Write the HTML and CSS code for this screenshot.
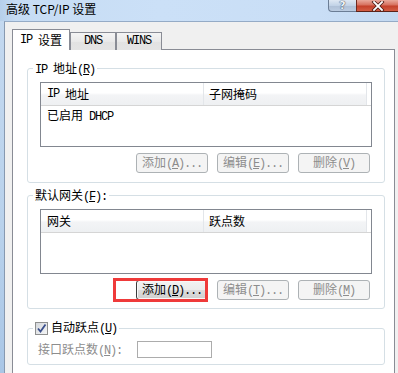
FILE: index.html
```html
<!DOCTYPE html>
<html lang="zh-CN">
<head>
<meta charset="utf-8">
<title>高级 TCP/IP 设置</title>
<link rel="stylesheet" href="styles.css">
</head>
<body>
<div class="window">
  <div class="titlebar">
    <span class="title">高级 TCP/IP 设置</span>
    <div class="caption">
      <div class="cbtn help">?</div>
      <div class="cbtn close">
        <svg width="14" height="10" viewBox="0 0 14 10"><path d="M3 1 L11 9 M11 1 L3 9" stroke="#4a1a14" stroke-width="3.4" stroke-linecap="square"/><path d="M3 1 L11 9 M11 1 L3 9" stroke="#fff" stroke-width="1.8" stroke-linecap="square"/></svg>
      </div>
    </div>
  </div>
  <div class="client">
    <div class="tabs">
      <div class="tab active"><span class="en">IP </span>设置</div>
      <div class="tab"><span class="en">DNS</span></div>
      <div class="tab"><span class="en">WINS</span></div>
    </div>
    <div class="panel">
      <fieldset class="group g1">
        <legend><span class="en">IP </span>地址<span class="en">(<u>R</u>)</span></legend>
        <div class="gbody">
          <div class="list">
            <div class="lhead">
              <div class="col c1"><span class="en">IP </span>地址</div>
              <div class="col c2">子网掩码</div>
              <div class="col c3"></div>
            </div>
            <div class="lrow">已启用<span class="en"> DHCP</span></div>
          </div>
          <div class="btns">
            <button class="btn" disabled>添加<span class="en">(<u>A</u>)...</span></button>
            <button class="btn" disabled>编辑<span class="en">(<u>E</u>)...</span></button>
            <button class="btn" disabled>删除<span class="en">(<u>V</u>)</span></button>
          </div>
        </div>
      </fieldset>
      <fieldset class="group g2">
        <legend>默认网关<span class="en">(<u>F</u>):</span></legend>
        <div class="gbody">
          <div class="list">
            <div class="lhead">
              <div class="col c1">网关</div>
              <div class="col c2">跃点数</div>
              <div class="col c3"></div>
            </div>
          </div>
          <div class="btns">
            <button class="btn default">添加<span class="en">(<u>D</u>)...</span></button>
            <button class="btn" disabled>编辑<span class="en">(<u>T</u>)...</span></button>
            <button class="btn" disabled>删除<span class="en">(<u>M</u>)</span></button>
          </div>
        </div>
      </fieldset>
      <fieldset class="group g3">
        <legend>
          <span class="check"><svg width="11" height="11" viewBox="0 0 11 11"><path d="M2 5.5 L4.5 8.5 L9.5 1.5" fill="none" stroke="#3a4f8c" stroke-width="1.8"/></svg></span>
          <span>自动跃点<span class="en">(<u>U</u>)</span></span>
        </legend>
        <div class="gbody">
          <div class="metric">
            <span class="mlabel">接口跃点数<span class="en">(<u>N</u>):</span></span>
            <span class="input"></span>
          </div>
        </div>
      </fieldset>
    </div>
  </div>
  <div class="highlight"></div>
</div>
</body>
</html>
```
FILE: styles.css
```css
* { box-sizing: border-box; }
html, body { margin: 0; padding: 0; }
body {
  width: 398px;
  height: 373px;
  overflow: hidden;
  font: 12px/14px "Noto Sans CJK SC", "Liberation Sans", sans-serif;
  color: #000;
  background: #f0f0f0;
}
.en {
  font-family: "Liberation Mono", monospace;
  font-size: 12px;
  letter-spacing: -1.2px;
  white-space: pre;
}
.window {
  position: relative;
  width: 398px;
  height: 373px;
  overflow: hidden;
  background: linear-gradient(to bottom, #c4d9f0, #b9d2ec 60%, #a9c6e6);
}
.titlebar {
  height: 21px;
  display: flex;
  align-items: flex-start;
  background: linear-gradient(90deg, #b6cfea 0%, #c6dcf4 4%, #cbe0f7 40%, #c9def6 80%, #c3d9f1 100%);
}
.title {
  padding: 0 0 0 6px;
  font-size: 12px;
  line-height: 17px;
  color: #000;
  white-space: nowrap;
}
.caption {
  margin-left: auto;
  display: flex;
  height: 12px;
}
.cbtn {
  height: 12px;
  display: flex;
  align-items: center;
  justify-content: center;
}
.help {
  width: 28px;
  border: 1px solid #6b7d95;
  border-top: none;
  border-right: none;
  border-bottom-left-radius: 4px;
  background: linear-gradient(#dfe8f3, #c2d3e7 50%, #aebfd6 51%, #bccde2);
  color: #eef3f9;
  font: bold 11px/11px "DejaVu Sans", sans-serif;
  text-shadow: 0 0 1px #2d3b52, 0 0 1px #2d3b52;
}
.close {
  width: 42px;
  border-bottom: 1px solid #5d2218;
  border-left: 1px solid #6f2a20;
  background: linear-gradient(#e9a99c, #d7715f 45%, #c4402a 55%, #d35d44);
}
.client {
  margin-left: 4px;
  height: 352px;
  border-left: 1px solid #8799b0;
  border-top: 1px solid #95abc6;
  background: #f0f0f0;
  padding: 7px 0 0 7px;
}
.tabs {
  display: flex;
  align-items: flex-end;
  height: 21px;
}
.tab {
  height: 18px;
  width: 46px;
  border: 1px solid #898c95;
  border-bottom: none;
  background: linear-gradient(#f4f4f4, #e9e9e9 50%, #e2e2e2 51%, #e4e4e4);
  display: flex;
  align-items: center;
  justify-content: center;
  padding-bottom: 1px;
}
.tab.active {
  position: relative;
  z-index: 1;
  height: 21px;
  width: 58px;
  background: #fff;
}
.panel {
  margin-top: -1px;
  width: 383px;
  height: 330px;
  border: 1px solid #898c95;
  background: #fff;
  padding: 0 9px 0 14px;
}
.group {
  margin: 11px 0 0;
  min-width: 0;
  border: 1px solid #d5dfe5;
  border-radius: 3px;
  padding: 0 5px 9px;
}
.group legend {
  padding: 0 2px;
  height: 14px;
  line-height: 14px;
}
.g2 { margin-top: 5px; padding-bottom: 8px; }
.g3 { margin-top: 11px; padding-bottom: 6px; }
.g3 legend {
  height: 16px;
  display: flex;
  align-items: center;
  gap: 3px;
}
.gbody {
  padding: 7px 7px 0;
}
.list {
  height: 65px;
  border: 1px solid #828790;
  background: #fff;
}
.lhead {
  height: 23px;
  display: flex;
  border-bottom: 1px solid #d5d5d5;
  background: linear-gradient(#ffffff, #ffffff 45%, #f3f4f6 55%, #eef0f2);
}
.col {
  display: flex;
  align-items: center;
  height: 22px;
  white-space: pre;
}
.c1 { width: 163px; padding-left: 6px; border-right: 1px solid #e3e6ea; }
.c2 { width: 163px; padding-left: 5px; border-right: 1px solid #e3e6ea; }
.c3 { flex: 1; background: #fff; }
.lrow {
  height: 17px;
  line-height: 17px;
  padding-left: 6px;
}
.btns {
  display: flex;
  justify-content: flex-end;
  gap: 9px;
  margin-top: 6px;
  padding-right: 2px;
}
.btn {
  width: 72px;
  height: 20px;
  margin: 0;
  padding: 0;
  font: 12px/14px "Noto Sans CJK SC", "Liberation Sans", sans-serif;
  border: 1px solid #adb2b5;
  border-radius: 3px;
  background: #f4f4f4;
  color: #8d8d8d;
  white-space: nowrap;
}
.btn.default {
  color: #000;
  border-color: #3c3c3c;
  background: linear-gradient(#f2f2f2, #ebebeb 50%, #dddddd 51%, #cfcfcf);
  box-shadow: inset 0 0 0 1px #f8f8f8;
}
.check {
  width: 13px;
  height: 13px;
  border: 1px solid #8e8f8f;
  background: linear-gradient(135deg, #d5d8dc, #f4f5f6);
  display: flex;
  align-items: center;
  justify-content: center;
}
.check svg { display: block; }
.metric {
  display: flex;
  align-items: center;
  height: 17px;
}
.g3 .gbody { padding: 5px 5px 0; }
.mlabel {
  width: 99px;
  color: #8d8d8d;
}
.input {
  width: 75px;
  height: 17px;
  border: 1px solid #acacac;
  background: #fff;
}
.highlight {
  position: absolute;
  left: 113px;
  top: 278px;
  width: 95px;
  height: 24px;
  border: 3px solid #ef3a3a;
}
```
